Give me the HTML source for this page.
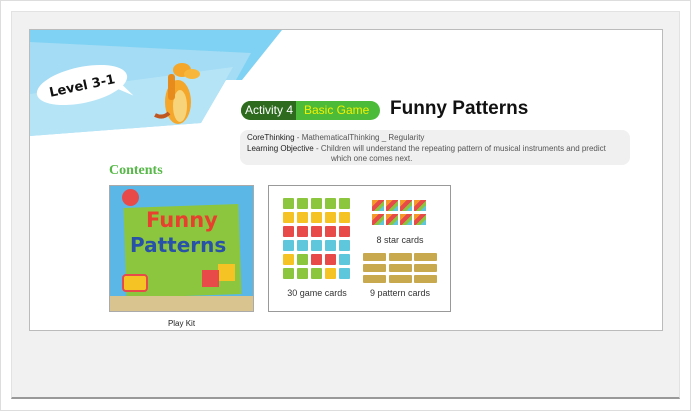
<!DOCTYPE html>
<html><head><meta charset="utf-8"><style>
*{margin:0;padding:0;box-sizing:border-box}
body{width:691px;height:411px;background:#fff;position:relative;overflow:hidden;font-family:"Liberation Sans",sans-serif}
.outer{position:absolute;left:0;top:0;width:691px;height:411px;border:1px solid #ddd}
.frame{position:absolute;left:11px;top:11px;width:669px;height:388px;background:#f1f1f1;border:1px solid #e2e2e2;border-bottom:2px solid #999}
.panel{position:absolute;left:29px;top:29px;width:634px;height:302px;background:#fff;border:1px solid #bbb;overflow:hidden}
.abs{position:absolute}
.gc{position:absolute;width:11px;height:11px;border-radius:1px}
.sc{position:absolute;width:12px;height:11px;background:linear-gradient(135deg,#f39a2b 0 30%,#e84a4a 30% 55%,#8cc63f 55% 75%,#5fc7dc 75%)}
.pc{position:absolute;width:23px;height:8px;background:#c9a94e;border-radius:1px}
</style></head><body>
<div class="outer"></div>
<div class="frame"></div>
<div class="panel">
<svg class="abs" style="left:0;top:0" width="634" height="302">
<polygon points="0,0 252,0 212,50 0,50" fill="#7fd2f3"/>
<polygon points="0,12 221,23 206,50 196,50 171,93 0,106" fill="#a3dcf4"/>
<polygon points="0,64 203,37 171,93 0,106" fill="#b5e4f7"/>
<g transform="rotate(-12 52 55)">
<ellipse cx="52" cy="55" rx="46" ry="18" fill="#fff"/>
<polygon points="80,62 100,76 88,58" fill="#fff"/>
<text x="52" y="60" text-anchor="middle" font-family="'DejaVu Sans',sans-serif" font-weight="bold" font-size="13" fill="#111">Level 3-1</text>
</g>
<ellipse cx="148" cy="72" rx="13" ry="22" fill="#f4a72a"/>
<ellipse cx="150" cy="76" rx="7" ry="16" fill="#f7d37a"/>
<ellipse cx="152" cy="40" rx="9" ry="7" fill="#f4a72a"/>
<ellipse cx="162" cy="44" rx="8" ry="5" fill="#f8b73a"/>
<rect x="138" y="44" width="7" height="26" rx="3" fill="#e88b1d"/>
<path d="M125,85 q8,4 14,-2" stroke="#c0561f" stroke-width="4" fill="none"/>
</svg>
<div class="abs" style="left:211px;top:71px;width:139px;height:19px;border-radius:10px;background:#4dbb3a;overflow:hidden;font-size:12px;line-height:19px">
<span class="abs" style="left:0;top:0;width:55px;height:19px;background:#2e6b1f;color:#fff;padding-left:4px;white-space:nowrap">Activity 4</span>
<span class="abs" style="left:63px;top:0;color:#f2f000;white-space:nowrap">Basic Game</span></div>
<div class="abs" style="left:360px;top:68px;font-family:'Liberation Sans',sans-serif;font-weight:bold;font-size:19px;color:#111">Funny Patterns</div>
<div class="abs" style="left:210px;top:100px;width:390px;height:35px;border-radius:8px;background:#f0f0f0;font-size:8px;color:#555;line-height:10.5px;padding:3px 0 0 7px">
<div><span style="color:#222">CoreThinking</span> - MathematicalThinking _ Regularity</div>
<div><span style="color:#222">Learning Objective</span> - Children will understand the repeating pattern of musical instruments and predict</div>
<div style="padding-left:84px">which one comes next.</div></div>
<div class="abs" style="left:79px;top:133px;font-family:'Liberation Serif',serif;font-weight:bold;font-size:14px;color:#56b847">Contents</div>
<div class="abs" style="left:79px;top:155px;width:145px;height:127px;border:1px solid #aaa;background:#5bb8e6;overflow:hidden">
<div class="abs" style="left:15px;top:20px;width:115px;height:90px;background:#8cc63f;transform:rotate(-2deg)"></div>
<div class="abs" style="left:0;top:110px;width:145px;height:17px;background:#d9c38f"></div>
<div class="abs" style="left:36px;top:22px;font-family:'DejaVu Sans',sans-serif;font-weight:bold;font-size:21px;color:#e8402f">Funny</div>
<div class="abs" style="left:20px;top:47px;font-family:'DejaVu Sans',sans-serif;font-weight:bold;font-size:20px;color:#2852a8">Patterns</div>
<div class="abs" style="left:12px;top:88px;width:26px;height:18px;border-radius:4px;background:#f6c325;border:2px solid #e84a4a"></div>
<div class="abs" style="left:108px;top:78px;width:17px;height:17px;background:#f6c325"></div>
<div class="abs" style="left:92px;top:84px;width:17px;height:17px;background:#e84a4a"></div>
<div class="abs" style="left:12px;top:3px;width:17px;height:17px;border-radius:50%;background:#e84a4a"></div>
</div>
<div class="abs" style="left:79px;top:289px;width:145px;text-align:center;font-size:8px;color:#222">Play Kit</div>
<div class="abs" style="left:238px;top:155px;width:183px;height:127px;border:1px solid #999;background:#fff"></div>
<div class="abs" style="left:237px;top:258px;width:100px;text-align:center;font-size:9px;color:#333">30 game cards</div>
<div class="abs" style="left:320px;top:205px;width:100px;text-align:center;font-size:9px;color:#333">8 star cards</div>
<div class="abs" style="left:320px;top:258px;width:100px;text-align:center;font-size:9px;color:#333">9 pattern cards</div>
</div>
<div class="abs" style="left:0;top:0">
<div class="gc" style="left:283px;top:198px;background:#8cc63f"></div><div class="gc" style="left:297px;top:198px;background:#8cc63f"></div><div class="gc" style="left:311px;top:198px;background:#8cc63f"></div><div class="gc" style="left:325px;top:198px;background:#8cc63f"></div><div class="gc" style="left:339px;top:198px;background:#8cc63f"></div>
<div class="gc" style="left:283px;top:212px;background:#f6c325"></div><div class="gc" style="left:297px;top:212px;background:#f6c325"></div><div class="gc" style="left:311px;top:212px;background:#f6c325"></div><div class="gc" style="left:325px;top:212px;background:#f6c325"></div><div class="gc" style="left:339px;top:212px;background:#f6c325"></div>
<div class="gc" style="left:283px;top:226px;background:#e84a4a"></div><div class="gc" style="left:297px;top:226px;background:#e84a4a"></div><div class="gc" style="left:311px;top:226px;background:#e84a4a"></div><div class="gc" style="left:325px;top:226px;background:#e84a4a"></div><div class="gc" style="left:339px;top:226px;background:#e84a4a"></div>
<div class="gc" style="left:283px;top:240px;background:#5fc7dc"></div><div class="gc" style="left:297px;top:240px;background:#5fc7dc"></div><div class="gc" style="left:311px;top:240px;background:#5fc7dc"></div><div class="gc" style="left:325px;top:240px;background:#5fc7dc"></div><div class="gc" style="left:339px;top:240px;background:#5fc7dc"></div>
<div class="gc" style="left:283px;top:254px;background:#f6c325"></div><div class="gc" style="left:297px;top:254px;background:#8cc63f"></div><div class="gc" style="left:311px;top:254px;background:#e84a4a"></div><div class="gc" style="left:325px;top:254px;background:#e84a4a"></div><div class="gc" style="left:339px;top:254px;background:#5fc7dc"></div>
<div class="gc" style="left:283px;top:268px;background:#8cc63f"></div><div class="gc" style="left:297px;top:268px;background:#8cc63f"></div><div class="gc" style="left:311px;top:268px;background:#8cc63f"></div><div class="gc" style="left:325px;top:268px;background:#f6c325"></div><div class="gc" style="left:339px;top:268px;background:#5fc7dc"></div>
<div class="sc" style="left:372px;top:200px"></div><div class="sc" style="left:386px;top:200px"></div><div class="sc" style="left:400px;top:200px"></div><div class="sc" style="left:414px;top:200px"></div>
<div class="sc" style="left:372px;top:214px"></div><div class="sc" style="left:386px;top:214px"></div><div class="sc" style="left:400px;top:214px"></div><div class="sc" style="left:414px;top:214px"></div>
<div class="pc" style="left:363px;top:253px"></div><div class="pc" style="left:389px;top:253px"></div><div class="pc" style="left:414px;top:253px"></div>
<div class="pc" style="left:363px;top:264px"></div><div class="pc" style="left:389px;top:264px"></div><div class="pc" style="left:414px;top:264px"></div>
<div class="pc" style="left:363px;top:275px"></div><div class="pc" style="left:389px;top:275px"></div><div class="pc" style="left:414px;top:275px"></div>
</div>
</body></html>
